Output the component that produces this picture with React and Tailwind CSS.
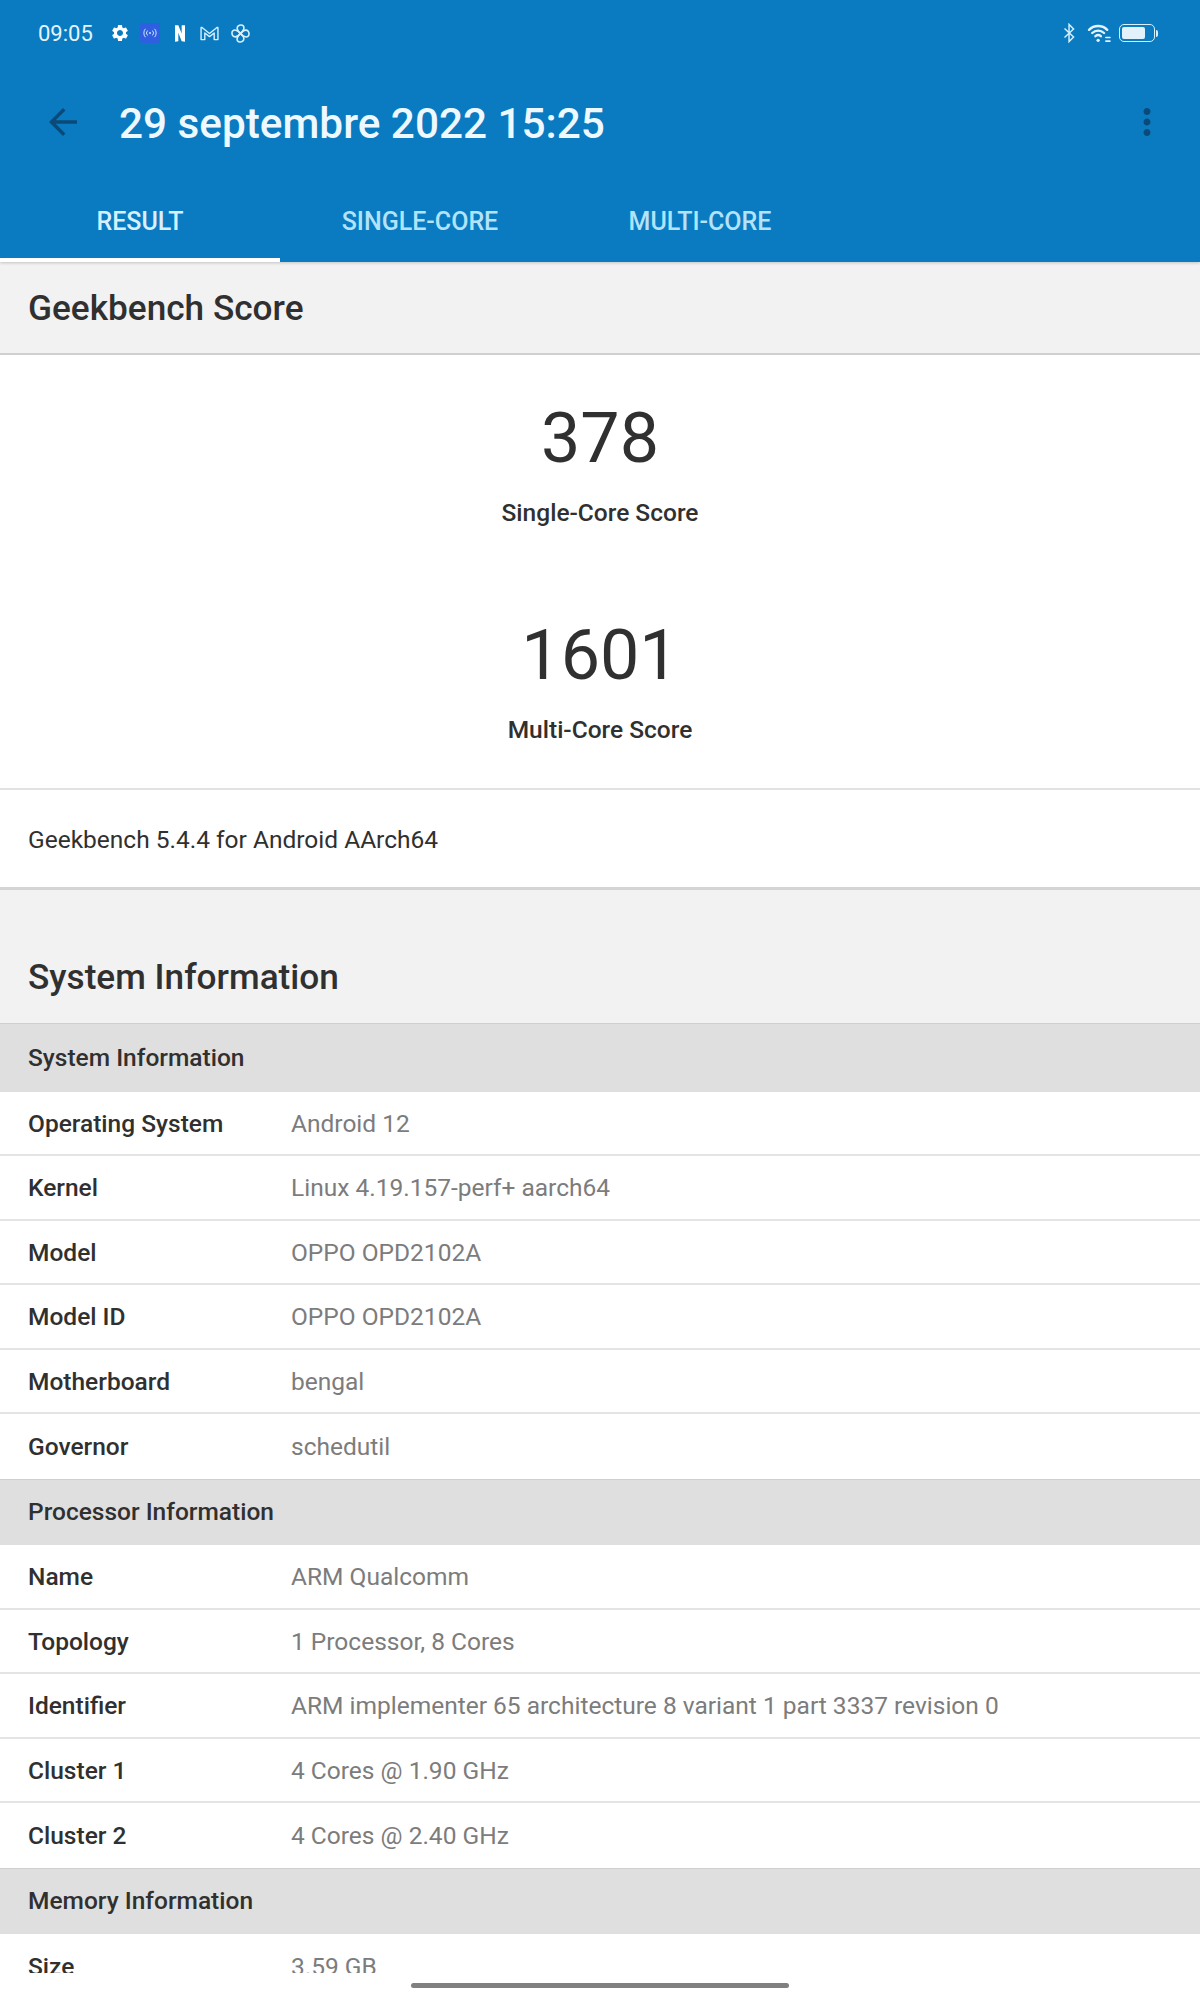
import React from "react";
import { MdSettings, MdMoreVert, MdArrowBack } from "react-icons/md";

const sections = [
  {
    title: "System Information",
    band: "h-[68.5px] pt-[2px]",
    rows: [
      ["Operating System", "Android 12"],
      ["Kernel", "Linux 4.19.157-perf+ aarch64"],
      ["Model", "OPPO OPD2102A"],
      ["Model ID", "OPPO OPD2102A"],
      ["Motherboard", "bengal"],
      ["Governor", "schedutil"],
    ],
  },
  {
    title: "Processor Information",
    band: "h-[66.5px]",
    rows: [
      ["Name", "ARM Qualcomm"],
      ["Topology", "1 Processor, 8 Cores"],
      ["Identifier", "ARM implementer 65 architecture 8 variant 1 part 3337 revision 0"],
      ["Cluster 1", "4 Cores @ 1.90 GHz"],
      ["Cluster 2", "4 Cores @ 2.40 GHz"],
    ],
  },
  {
    title: "Memory Information",
    band: "h-[66.5px]",
    rows: [["Size", "3.59 GB"]],
  },
];

function StatusIcons() {
  return (
    <div className="ml-[17px] flex items-center">
      <MdSettings className="w-[20px] h-[20px] text-white" />
      {/* hotspot badge */}
      <div className="ml-[10px] w-5 h-5 rounded-[3px] bg-[#2f5fe0] flex items-center justify-center">
        <svg viewBox="0 0 20 20" className="w-[14px] h-[14px]" fill="none" stroke="#cfe6ff" strokeWidth="1.4">
          <circle cx="10" cy="10" r="1.4" fill="#cfe6ff" stroke="none" />
          <path d="M6.500 6.500a5 5 0 0 0 0 7M13.500 6.500a5 5 0 0 1 0 7M3.500 4a9 9 0 0 0 0 12M16.500 4a9 9 0 0 1 0 12" />
        </svg>
      </div>
      {/* netflix */}
      <svg viewBox="0 0 12 20" className="ml-[15px] w-[10px] h-[17px]" fill="white">
        <path d="M0 0h4l4 10V0h4v20l-4-.6L4 9v10.400L0 20z" />
      </svg>
      {/* gmail */}
      <svg viewBox="0 0 20 16" className="ml-[15px] w-[19px] h-[15px]" fill="none" stroke="#d6f0ff" strokeWidth="1.5" strokeLinejoin="round">
        <path d="M1 14.500V2.200q0-1 1-.6l8 6.400 8-6.400q1-.4 1 .6v12.300h-4V7.500l-5 3.800-5-3.800v7z" />
      </svg>
      {/* fan */}
      <svg viewBox="0 0 20 20" className="ml-[12px] w-[19px] h-[19px]" fill="none" stroke="#d6f0ff" strokeWidth="1.700" strokeLinejoin="round">
        {[0, 90, 180, 270].map((angle) => (
          <path
            key={angle}
            transform={`rotate(${angle} 10 10)`}
            d="M10 10C8 8.500 6.500 6.500 6.500 4.500 6.500 2.200 8.300 1 10.500 1 12.800 1 14 2.800 13.500 5 13 7.300 11.500 9 10 10z"
          />
        ))}
      </svg>
    </div>
  );
}

function SystemIcons() {
  return (
    <div className="flex items-center">
      <svg viewBox="0 0 14 22" className="w-[13px] h-[20px]" fill="none" stroke="#d6f0ff" strokeWidth="1.6">
        <path d="M1.500 6l10 9.500L6.500 20.500V1.500l5 5L1.500 16" />
      </svg>
      <svg viewBox="0 0 26 22" className="ml-[11px] w-[25px] h-[20px]" fill="none" stroke="#e4f4ff" strokeWidth="2.600" strokeLinecap="round">
        <path d="M1.500 7.500a14 14 0 0 1 20 0M5 11a9.500 9.500 0 0 1 13 0M8.500 14.500a4.800 4.800 0 0 1 6 0" />
        <circle cx="11.500" cy="19" r="1.800" fill="#e4f4ff" stroke="none" />
        <path d="M20 16h4.500M20 20h4.500" strokeWidth="1.800" />
      </svg>
      <div className="ml-[7px] flex items-center">
        <div className="w-[36px] h-[18px] rounded-[5px] border-[1.5px] border-[#d6f0ff] p-[2px]">
          <div className="w-[23px] h-full rounded-[2px] bg-[#e3f1fb]" />
        </div>
        <div className="ml-[1px] w-[2px] h-[7px] rounded-r-sm bg-[#d6f0ff]" />
      </div>
    </div>
  );
}

function ScoreBlock({ score, label }) {
  return (
    <div className="flex flex-col items-center">
      <div className="h-[86px] flex items-center text-[70px] text-[#303030]">{score}</div>
      <div className="mt-[17px] text-[24.5px] font-medium leading-[30px] text-[#303030]">{label}</div>
    </div>
  );
}

export default function App() {
  return (
    <div
      className="relative w-[1200px] h-[2000px] overflow-hidden bg-white"
      style={{ fontFamily: "Roboto, sans-serif" }}
    >
      <header className="relative z-10 h-[262px] bg-[#0a7bc0] shadow-[0_1px_3px_rgba(0,0,0,0.2)]">
        <div className="h-[66px] pl-[38px] pr-[42px] flex items-center justify-between">
          <div className="flex items-center">
            <span className="text-[22px] text-[#e4f4ff]">09:05</span>
            <StatusIcons />
          </div>
          <SystemIcons />
        </div>
        <div className="h-[114px] flex items-center">
          <MdArrowBack className="ml-[42px] -mt-[3px] w-[42px] h-[42px] text-[#0b4a78]" />
          <h1 className="ml-[35px] mt-[2px] text-[42.3px] font-medium text-[#eef8ff]">29 septembre 2022 15:25</h1>
          <MdMoreVert className="ml-auto mr-[32px] -mt-[3px] w-[42px] h-[42px] text-[#0b4a78]" />
        </div>
        <nav className="h-[82px] flex">
          <div className="w-[280px] h-full flex items-center justify-center pt-[5px] border-b-4 border-white text-[25px] font-medium text-[#d6f0ff]">
            RESULT
          </div>
          <div className="w-[280px] h-full flex items-center justify-center pt-[1px] text-[25px] font-medium text-[#b3e3fa]">
            SINGLE-CORE
          </div>
          <div className="w-[280px] h-full flex items-center justify-center pt-[1px] text-[25px] font-medium text-[#b3e3fa]">
            MULTI-CORE
          </div>
        </nav>
      </header>

      <div className="h-[93px] pt-[2px] bg-[#f2f2f2] border-b-2 border-[#d0d0d0] px-7 flex items-center text-[35.2px] font-medium text-[#303030]">
        Geekbench Score
      </div>

      <div className="h-[435px] pt-[40px] border-b-2 border-[#e2e2e2] flex flex-col gap-[84px]">
        <ScoreBlock score="378" label="Single-Core Score" />
        <ScoreBlock score="1601" label="Multi-Core Score" />
      </div>

      <div className="h-[100px] pt-[4px] px-7 border-b-[3px] border-[#d4d4d4] flex items-center text-[24.5px] text-[#303030]">
        Geekbench 5.4.4 for Android AArch64
      </div>

      <div className="h-[133px] pb-[19px] bg-[#f2f2f2] px-7 flex items-end text-[35.2px] font-medium text-[#303030]">
        System Information
      </div>

      {sections.map((section) => (
        <section key={section.title}>
          <div className={`${section.band} px-7 bg-[#dfdfdf] border-t border-[#cfcfcf] flex items-center text-[24.5px] font-medium text-[#303030]`}>
            {section.title}
          </div>
          {section.rows.map(([label, value]) => (
            <div key={label} className="h-[64.5px] pt-[3px] px-7 flex items-center border-b-2 border-[#e4e4e4] text-[24.5px] last:border-b-0">
              <div className="w-[263px] shrink-0 font-medium text-[#303030]">{label}</div>
              <div className="text-[#7c7c7c]">{value}</div>
            </div>
          ))}
        </section>
      ))}

      {/* gesture bar */}
      <div className="absolute inset-x-0 bottom-0 h-[27px] bg-white flex justify-center pt-[10px]">
        <div className="w-[378px] h-[5px] rounded-full bg-[#808080]" />
      </div>
    </div>
  );
}
